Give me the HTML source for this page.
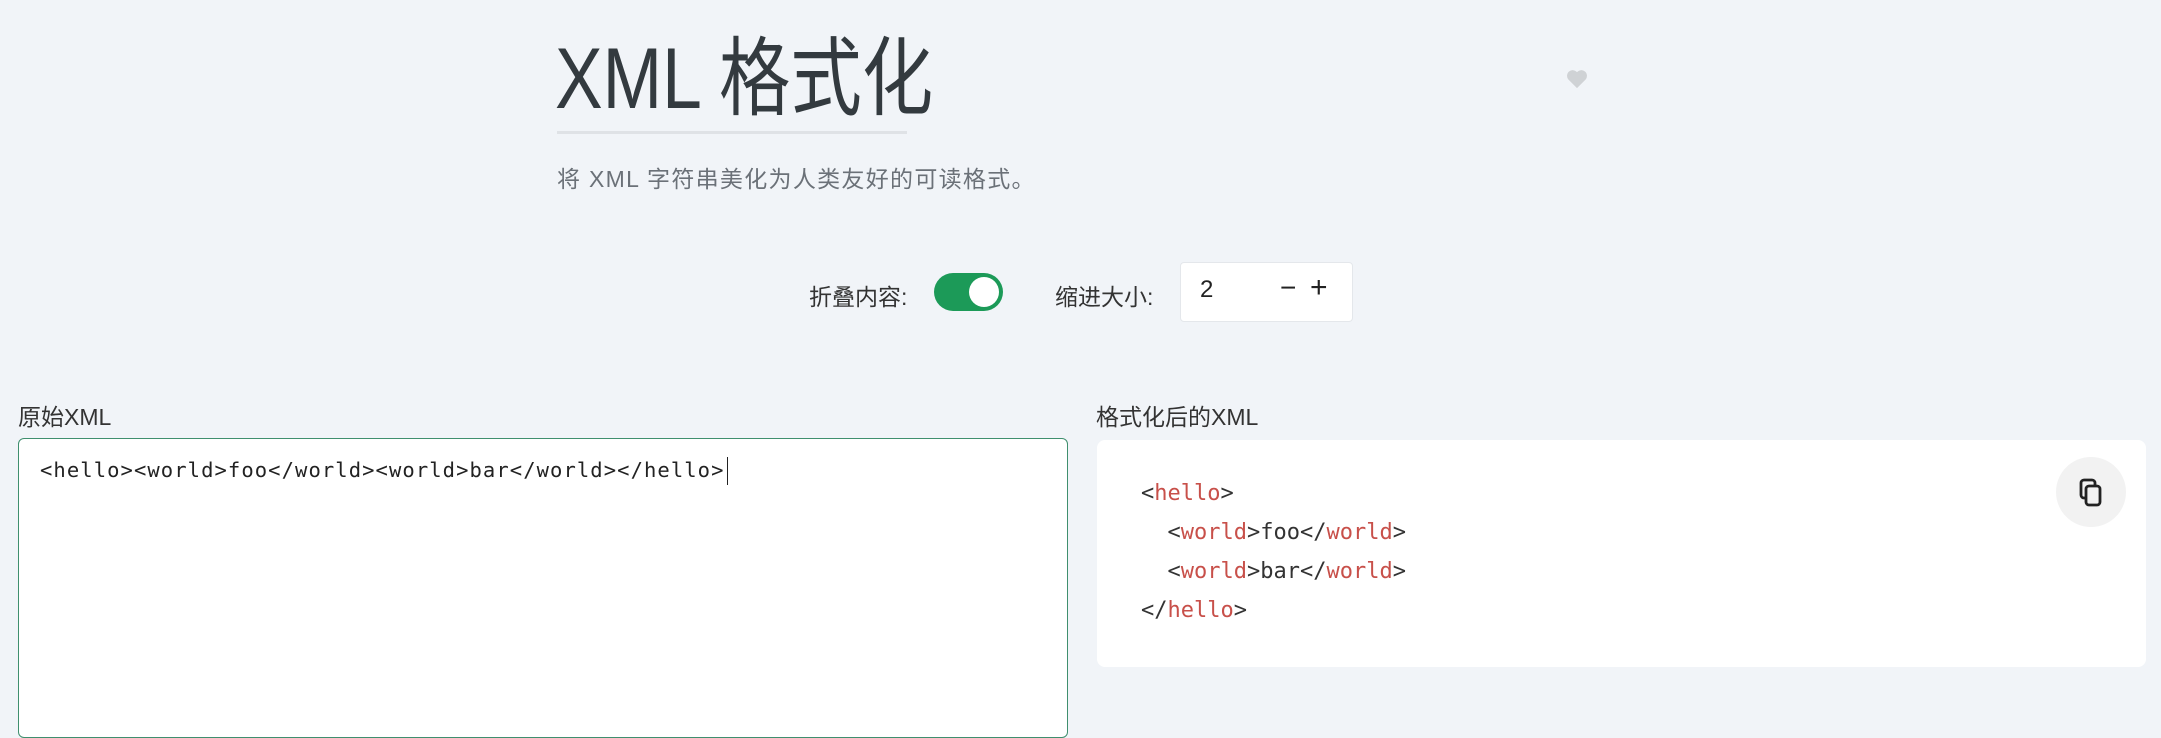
<!DOCTYPE html>
<html><head><meta charset="utf-8"><style>
*{box-sizing:border-box;margin:0;padding:0}
body{width:2161px;height:713px;overflow:hidden;background:#f1f4f8;font-family:"Liberation Sans","Noto Sans CJK SC",sans-serif;color:#333;position:relative}
.abs{position:absolute}
h1{position:absolute;left:555px;top:29px;font-size:86px;font-weight:400;color:#333a3f;line-height:100px;white-space:nowrap;transform:scaleX(0.83);transform-origin:0 0}
.ul{left:557px;top:131px;width:350px;height:3px;background:#dfe2e6}
.sub{left:557px;top:160px;font-size:23px;letter-spacing:1.3px;color:#6b7178;white-space:nowrap}
.lab{font-size:23px;color:#333;white-space:nowrap}
.tog{left:934px;top:273px;width:69px;height:38px;border-radius:19px;background:#1c9a58}
.tog::after{content:"";position:absolute;right:4px;top:4px;width:30px;height:30px;border-radius:50%;background:#fff}
.inp{left:1180px;top:262px;width:173px;height:60px;background:#fff;border:1px solid #e4e7eb;border-radius:4px}
.mono{font-family:"DejaVu Sans Mono","Liberation Mono",monospace}
.ta{left:18px;top:438px;width:1050px;height:300px;background:#fff;border:1.5px solid #3f8f6e;border-radius:6px}
.card{left:1097px;top:440px;width:1049px;height:227px;background:#fff;border-radius:8px}
.code{left:1141px;top:474px;font-size:22px;line-height:39px;color:#333;white-space:pre}
.t{color:#c8504a}
.cp{left:2056px;top:457px;width:70px;height:70px;border-radius:50%;background:#f2f2f2}
</style></head><body>
<h1>XML 格式化</h1>
<div class="abs ul"></div>
<div class="abs sub">将 XML 字符串美化为人类友好的可读格式。</div>
<svg class="abs" style="left:1566px;top:69px" width="22" height="20" viewBox="0 0 24 22"><path d="M12 21 L2.5 11.5 A5.5 5.5 0 0 1 12 3.5 A5.5 5.5 0 0 1 21.5 11.5 Z" fill="#cfd2d5"/></svg>
<div class="abs lab" style="left:809px;top:278px">折叠内容:</div>
<div class="abs tog"></div>
<div class="abs lab" style="left:1055px;top:278px">缩进大小:</div>
<div class="abs inp"></div>
<div class="abs" style="left:1200px;top:276px;font-size:24px;color:#222">2</div>
<div class="abs" style="left:1280px;top:272px;font-size:28px;color:#222">−</div>
<div class="abs" style="left:1310px;top:271px;font-size:30px;color:#222">+</div>
<div class="abs lab" style="left:18px;top:398px">原始XML</div>
<div class="abs lab" style="left:1096px;top:398px">格式化后的XML</div>
<div class="abs ta"></div>
<div class="abs mono" style="left:40px;top:457px;font-size:20.5px;letter-spacing:1.08px;color:#222;white-space:pre">&lt;hello&gt;&lt;world&gt;foo&lt;/world&gt;&lt;world&gt;bar&lt;/world&gt;&lt;/hello&gt;<span style="display:inline-block;width:1px;height:28px;background:#222;vertical-align:middle;margin-left:2px"></span></div>
<div class="abs card"></div>
<div class="abs code mono">&lt;<span class="t">hello</span>&gt;
  &lt;<span class="t">world</span>&gt;foo&lt;/<span class="t">world</span>&gt;
  &lt;<span class="t">world</span>&gt;bar&lt;/<span class="t">world</span>&gt;
&lt;/<span class="t">hello</span>&gt;</div>
<div class="abs cp"></div>
<svg class="abs" style="left:2078px;top:478px" width="26" height="30" viewBox="0 0 26 30"><rect x="3" y="2" width="14" height="18" rx="3" fill="none" stroke="#222" stroke-width="2.8"/><rect x="8" y="8" width="14" height="19" rx="3" fill="#f2f2f2" stroke="#222" stroke-width="2.8"/></svg>
</body></html>
